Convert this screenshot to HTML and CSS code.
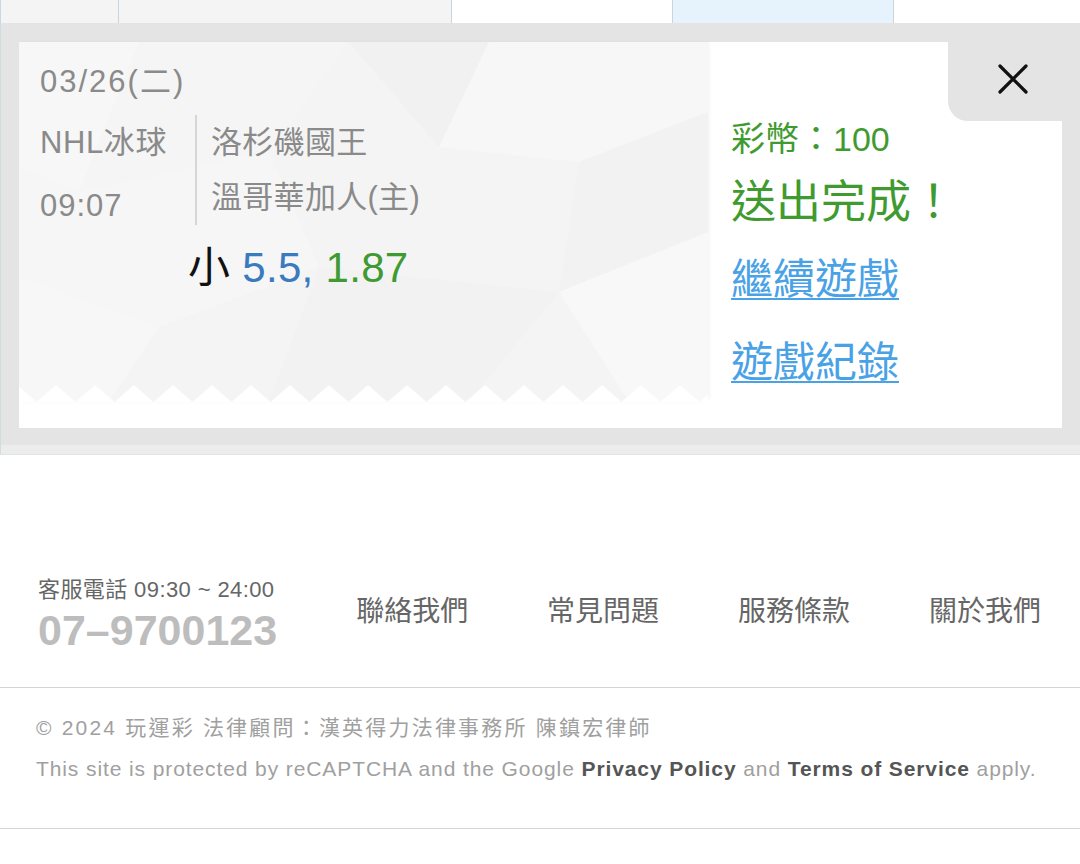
FILE: index.html
```html
<!DOCTYPE html>
<html lang="zh-Hant">
<head>
<meta charset="utf-8">
<title>送出完成</title>
<link rel="stylesheet" href="styles.css">
</head>
<body>
<div class="tabs">
  <div class="tab tab-a"></div>
  <div class="tab tab-b"></div>
  <div class="tab tab-c"></div>
  <div class="tab tab-d"></div>
  <div class="tab tab-e"></div>
</div>

<section class="panel">
  <div class="card">
    <div class="ticket">
      <div class="ticket-body">
        <div class="date">03/26(二)</div>
        <div class="match">
          <div class="meta">
            <div class="meta-item">NHL冰球</div>
            <div class="meta-item meta-time">09:07</div>
          </div>
          <div class="teams">
            <div class="team">洛杉磯國王</div>
            <div class="team">溫哥華加人(主)</div>
          </div>
        </div>
        <div class="pick">小 <span class="pick-line">5.5,</span> <span class="pick-odds">1.87</span></div>
      </div>
      <svg class="zigzag" width="689" height="17" viewBox="0 0 689 17" aria-hidden="true">
        <defs>
          <pattern id="teeth" x="17.5" y="0" width="39" height="17" patternUnits="userSpaceOnUse">
            <polygon points="0,17 19.5,0 39,17" fill="#ffffff"/>
          </pattern>
        </defs>
        <rect x="0" y="0" width="689" height="17" fill="url(#teeth)"/>
      </svg>
    </div>
    <div class="result">
      <div class="coins">彩幣：100</div>
      <div class="done">送出完成！</div>
      <a class="result-link link-first" href="#">繼續遊戲</a>
      <a class="result-link link-second" href="#">遊戲紀錄</a>
    </div>
    <button class="close" type="button" aria-label="關閉">
      <svg width="30" height="30" viewBox="0 0 30 30" aria-hidden="true">
        <path d="M2 2 L28 28 M28 2 L2 28" stroke="#111" stroke-width="3.2" stroke-linecap="round" fill="none"/>
      </svg>
    </button>
  </div>
</section>
<div class="panel-foot"></div>

<footer class="footer">
  <div class="contact-row">
    <div class="hotline">
      <div class="hours">客服電話 09:30 ~ 24:00</div>
      <div class="phone">07–9700123</div>
    </div>
    <nav class="links">
      <a class="footer-link" href="#">聯絡我們</a>
      <a class="footer-link" href="#">常見問題</a>
      <a class="footer-link" href="#">服務條款</a>
      <a class="footer-link" href="#">關於我們</a>
    </nav>
  </div>
  <div class="legal">
    <p class="legal-line">© 2024 玩運彩 法律顧問：漢英得力法律事務所 陳鎮宏律師</p>
    <p class="legal-line recaptcha">This site is protected by reCAPTCHA and the Google <b>Privacy Policy</b> and <b>Terms of Service</b> apply.</p>
  </div>
</footer>
</body>
</html>
```

FILE: styles.css
```css
* {
  box-sizing: border-box;
}

html, body {
  margin: 0;
  padding: 0;
  background: #ffffff;
}

body {
  width: 1080px;
  height: 864px;
  overflow: hidden;
  font-family: "Liberation Sans", "Noto Sans CJK TC", sans-serif;
  color: #666;
}

/* top tab strip */
.tabs {
  display: flex;
  height: 23px;
  border-left: 1px solid #cdd7df;
}

.tab {
  height: 23px;
  border-right: 1px solid #c9d4de;
  background: #f4f4f4;
}

.tab-a { width: 118px; }
.tab-b { width: 333px; }
.tab-c { width: 221px; background: #ffffff; }
.tab-d { width: 221px; background: #e6f3fd; }
.tab-e { flex: 1; background: #ffffff; border-right: 0; }

/* gray panel */
.panel {
  background: #e4e4e4;
  padding: 19px 18px 17px 18px;
  border-left: 1px solid #d3dbe2;
}

.panel-foot {
  height: 10px;
  background: #ececec;
  border-left: 1px solid #d3dbe2;
  border-bottom: 1px solid #dfe4e8;
}

.card {
  position: relative;
  display: flex;
  height: 386px;
  background: #ffffff;
}

.ticket {
  width: 689px;
  height: 360px;
  display: flex;
  flex-direction: column;
  background-color: #f4f4f4;
  background-image: url("data:image/svg+xml;utf8,<svg xmlns='http://www.w3.org/2000/svg' width='689' height='360'><polygon points='0,0 120,0 60,150 0,125' fill='%23f7f7f7'/><polygon points='120,0 330,0 250,110 60,150' fill='%23f5f5f5'/><polygon points='330,0 470,0 420,105' fill='%23f1f1f1'/><polygon points='470,0 689,0 689,70 560,120 420,105' fill='%23f7f7f7'/><polygon points='560,120 689,70 689,190 540,250' fill='%23f2f2f2'/><polygon points='540,250 689,190 689,360 610,360' fill='%23f8f8f8'/><polygon points='300,225 540,250 450,360 250,360' fill='%23f2f2f2'/><polygon points='0,235 140,285 90,360 0,360' fill='%23f7f7f7'/><polygon points='60,150 250,110 300,225 140,285 0,235 0,125' fill='%23f6f6f6'/></svg>");
  background-repeat: no-repeat;
  border-bottom-right-radius: 6px;
  box-shadow: 2px 0 3px rgba(0, 0, 0, 0.04);
}

.ticket-body {
  flex: 1;
  padding: 20px 0 0 21px;
  color: #8a8a8a;
  font-size: 31px;
}

.date {
  line-height: 40px;
  height: 40px;
  letter-spacing: 2px;
}

.match {
  display: flex;
  align-items: flex-start;
  margin-top: 13px;
}

.meta {
  width: 155px;
  display: flex;
  flex-direction: column;
  gap: 7px;
}

.meta-item {
  line-height: 56px;
  letter-spacing: 0.6px;
}

.meta-time {
  letter-spacing: 1px;
}

.teams {
  border-left: 2px solid #d6d6d6;
  padding-left: 14px;
}

.team {
  line-height: 55px;
  letter-spacing: 0.3px;
}

.pick {
  margin-top: 9px;
  padding-left: 148px;
  font-size: 42px;
  line-height: 50px;
  color: #111;
  letter-spacing: 0.3px;
}

.pick-line {
  color: #3a7abf;
}

.pick-odds {
  color: #3f9a31;
}

.zigzag {
  display: block;
}

/* result column */
.result {
  flex: 1;
  display: flex;
  flex-direction: column;
  align-items: flex-start;
  padding: 75px 0 0 23px;
  color: #3f9b2f;
}

.coins {
  font-size: 34px;
  line-height: 44px;
}

.done {
  font-size: 45px;
  line-height: 58px;
  margin-top: 13px;
}

.result-link {
  font-size: 42px;
  line-height: 56px;
  color: #4aa2e6;
  text-decoration: underline;
  text-decoration-thickness: 2px;
  text-underline-offset: 4px;
}

.link-first {
  margin-top: 20px;
}

.link-second {
  margin-top: 27px;
}

.close {
  position: absolute;
  top: 0;
  right: 0;
  width: 114px;
  height: 79px;
  border: 0;
  padding: 0 0 5px 16px;
  background: #e4e4e4;
  border-bottom-left-radius: 20px;
  display: flex;
  align-items: center;
  justify-content: center;
}

.close svg {
  display: block;
}

/* footer */
.footer {
  background: #ffffff;
}

.contact-row {
  display: flex;
  align-items: center;
  padding: 122px 39px 30px 38px;
  border-bottom: 1px solid #d4d4d4;
}

.hotline {
  display: flex;
  flex-direction: column;
}

.hours {
  font-size: 22px;
  line-height: 26px;
  color: #666;
  letter-spacing: 0.4px;
}

.phone {
  font-size: 43px;
  line-height: 54px;
  font-weight: bold;
  color: #bdbdbd;
}

.links {
  flex: 1;
  display: flex;
  justify-content: space-between;
  margin-left: 79px;
  margin-bottom: 10px;
}

.footer-link {
  font-size: 28px;
  line-height: 40px;
  color: #666;
  text-decoration: none;
}

.legal {
  padding: 19px 36px 39px 36px;
  border-bottom: 1px solid #d4d4d4;
}

.legal-line {
  margin: 0;
  font-size: 21px;
  line-height: 41px;
  color: #a0a0a0;
  letter-spacing: 2.2px;
  white-space: nowrap;
}

.recaptcha {
  letter-spacing: 0.9px;
}

.recaptcha b {
  color: #555;
  font-weight: bold;
}
```
